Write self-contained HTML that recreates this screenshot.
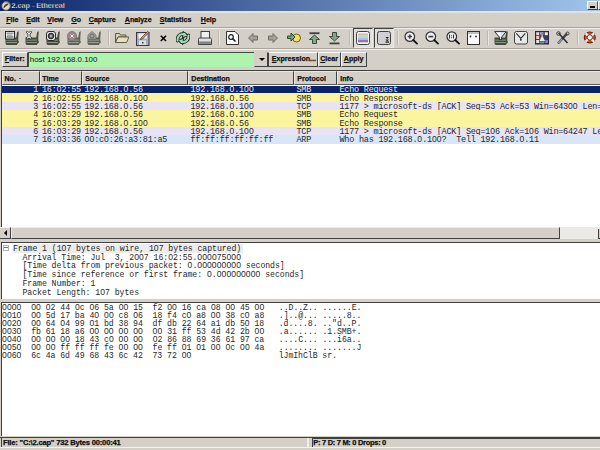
<!DOCTYPE html>
<html><head><meta charset="utf-8">
<style>
*{margin:0;padding:0;box-sizing:border-box}
html,body{width:600px;height:450px;overflow:hidden;background:#d4d0c8;font-family:"Liberation Sans",sans-serif}
.a{position:absolute}
.mono{font-family:"Liberation Mono",monospace;font-size:8.5px;letter-spacing:-0.24px;white-space:pre;line-height:8.3px}
.ui{position:absolute;font-size:7.1px;font-weight:bold;line-height:7.1px;color:#101010;white-space:pre;-webkit-text-stroke:0.25px #101010}
.ui u{text-decoration:underline;text-underline-offset:0.6px;text-decoration-thickness:0.8px}
#title{left:0;top:0;width:600px;height:10.5px;background:linear-gradient(to right,#0a246a 0px,#a6caf0 620px)}
.hdr{top:70.5px;height:14px;background:#d4d0c8;border-top:1px solid #eae8e2;border-left:1px solid #eae8e2;border-right:1px solid #404040;border-bottom:1px solid #5a5a5a}
.row{left:2px;width:598px;height:8.3px}
.cell{position:absolute;top:0.9px}
.dl{font-size:8.2px;letter-spacing:-0.06px;line-height:8px;color:#282828}
.z{font-family:"Liberation Sans",sans-serif;font-style:normal;display:inline-block;width:4.86px;text-align:center;letter-spacing:0;font-size:8.6px;line-height:0}
.btn{position:absolute;background:#d4d0c8;border-top:1px solid #fff;border-left:1px solid #fff;border-right:1px solid #404040;border-bottom:1px solid #404040}
</style></head><body>
<!-- title bar -->
<div class="a" id="title"></div>
<div class="a" style="left:1.5px;top:1px;width:9px;height:9px;border-radius:50%;background:#bcb8b0;border:1px solid #505050"></div>
<svg class="a" style="left:1px;top:0.5px" width="10" height="10" viewBox="0 0 10 10"><circle cx="5" cy="5" r="4.4" fill="#c8c4bc" stroke="#505050" stroke-width="0.8"/><circle cx="5" cy="5" r="3.1" fill="#e8dcc0"/><path d="M2.8 6.8 C3.3 4.2 4.8 3 7.2 2.8 L6.2 4.2 C5 4.6 4.2 5.6 2.8 6.8 Z" fill="#403828" stroke="#403828" stroke-width="0.7"/></svg>
<div class="ui" style="left:11.5px;top:2px;color:#fff;font-size:7.2px;line-height:7.2px">2.cap - Ethereal</div>
<div class="a" style="left:587px;top:0.5px;width:11px;height:9.5px;background:#d4d0c8;border-top:1px solid #fff;border-left:1px solid #fff;border-bottom:1px solid #404040;border-right:1px solid #505050"></div>
<div class="a" style="left:590px;top:6.3px;width:4.5px;height:1.6px;background:#000"></div>
<div class="a" style="left:598px;top:0.5px;width:2px;height:9.5px;background:#d4d0c8;border-top:1px solid #fff;border-left:1px solid #fff;border-bottom:1px solid #404040"></div>
<!-- frame strip -->
<div class="a" style="left:0;top:10.5px;width:600px;height:2px;background:#e4e2dc"></div>
<!-- menu -->
<div class="ui" style="left:6.2px;top:16.7px"><u>F</u>ile</div>
<div class="ui" style="left:26.3px;top:16.7px"><u>E</u>dit</div>
<div class="ui" style="left:47.3px;top:16.7px"><u>V</u>iew</div>
<div class="ui" style="left:71.3px;top:16.7px"><u>G</u>o</div>
<div class="ui" style="left:88.8px;top:16.7px"><u>C</u>apture</div>
<div class="ui" style="left:124.8px;top:16.7px"><u>A</u>nalyze</div>
<div class="ui" style="left:159.8px;top:16.7px"><u>S</u>tatistics</div>
<div class="ui" style="left:200.8px;top:16.7px"><u>H</u>elp</div>
<div class="a" style="left:0;top:26.5px;width:600px;height:1px;background:#a8a49c"></div>
<div class="a" style="left:0;top:27.5px;width:600px;height:1px;background:#f4f2ee"></div>
<!-- toolbar -->
<div class="a" style="left:107.5px;top:31px;width:1px;height:14px;background:#bcb8b0"></div><div class="a" style="left:108.5px;top:31px;width:1px;height:14px;background:#e8e6e0"></div>
<div class="a" style="left:218px;top:31px;width:1px;height:14px;background:#bcb8b0"></div><div class="a" style="left:219px;top:31px;width:1px;height:14px;background:#e8e6e0"></div>
<div class="a" style="left:348.5px;top:31px;width:1px;height:14px;background:#bcb8b0"></div><div class="a" style="left:349.5px;top:31px;width:1px;height:14px;background:#e8e6e0"></div>
<div class="a" style="left:396.5px;top:31px;width:1px;height:14px;background:#bcb8b0"></div><div class="a" style="left:397.5px;top:31px;width:1px;height:14px;background:#e8e6e0"></div>
<div class="a" style="left:487px;top:31px;width:1px;height:14px;background:#bcb8b0"></div><div class="a" style="left:488px;top:31px;width:1px;height:14px;background:#e8e6e0"></div>
<div class="a" style="left:576.5px;top:31px;width:1px;height:14px;background:#bcb8b0"></div><div class="a" style="left:577.5px;top:31px;width:1px;height:14px;background:#e8e6e0"></div>
<div class="a" style="left:352.5px;top:28px;width:20px;height:19.5px;border-top:1px solid #404040;border-left:1px solid #404040;border-right:1px solid #eceae4;border-bottom:1px solid #eceae4;background:#e2e0da"></div>
<div class="a" style="left:373.5px;top:28px;width:20px;height:19.5px;border-top:1px solid #404040;border-left:1px solid #404040;border-right:1px solid #eceae4;border-bottom:1px solid #eceae4;background:#e2e0da"></div>
<svg class="a" style="left:5px;top:31px" width="14" height="14" viewBox="0 0 14 14"><g opacity="1.0">
<path d="M0.5 6.5 L11.2 6.5 L12.2 1 L13.8 0.3 L13.3 6.5 L13.3 9.6 L14 11.6 L12.6 12.6 L12 14 L1.5 14 L0.5 12.6 Z" fill="#444c3e"/>
<rect x="1.3" y="8.6" width="10.5" height="1" fill="#8c9484"/>
<rect x="1.3" y="11" width="10.5" height="1" fill="#8c9484"/>
<rect x="0.5" y="0.5" width="9" height="7.5" fill="#f4f4f4" stroke="#282828" stroke-width="1"/><rect x="1.5" y="1.5" width="7" height="1.5" fill="#a0a0a0"/><rect x="2" y="3.6" width="5.5" height="0.9" fill="#787878"/><rect x="1.5" y="5.5" width="7" height="1" fill="#404040"/></g></svg>
<svg class="a" style="left:25px;top:31px" width="14" height="14" viewBox="0 0 14 14"><g opacity="1.0">
<path d="M0.5 6.5 L11.2 6.5 L12.2 1 L13.8 0.3 L13.3 6.5 L13.3 9.6 L14 11.6 L12.6 12.6 L12 14 L1.5 14 L0.5 12.6 Z" fill="#444c3e"/>
<rect x="1.3" y="8.6" width="10.5" height="1" fill="#8c9484"/>
<rect x="1.3" y="11" width="10.5" height="1" fill="#8c9484"/>
<path d="M1 1 L2.5 0.3 L4 1.5 L5.5 0.3 L7 1 L5 3 L5 5.5 L7 7 L5.5 8 L4 7 L2.5 8 L1 7 L3 5.5 L3 3 Z" fill="#f4f4f4" stroke="#282828" stroke-width="0.8"/></g></svg>
<svg class="a" style="left:46px;top:31px" width="14" height="14" viewBox="0 0 14 14"><g opacity="1.0">
<path d="M0.5 6.5 L11.2 6.5 L12.2 1 L13.8 0.3 L13.3 6.5 L13.3 9.6 L14 11.6 L12.6 12.6 L12 14 L1.5 14 L0.5 12.6 Z" fill="#444c3e"/>
<rect x="1.3" y="8.6" width="10.5" height="1" fill="#8c9484"/>
<rect x="1.3" y="11" width="10.5" height="1" fill="#8c9484"/>
<rect x="0.5" y="0.5" width="9" height="9" rx="2.5" fill="#e8e8e8" stroke="#282828"/><circle cx="5" cy="5" r="2.8" fill="#606060" stroke="#202020" stroke-width="1"/><circle cx="5" cy="5" r="1.2" fill="#b0b0b0"/></g></svg>
<svg class="a" style="left:66.5px;top:31px" width="14" height="14" viewBox="0 0 14 14"><g opacity="1.0">
<path d="M0.5 6.5 L11.2 6.5 L12.2 1 L13.8 0.3 L13.3 6.5 L13.3 9.6 L14 11.6 L12.6 12.6 L12 14 L1.5 14 L0.5 12.6 Z" fill="#5e645a"/>
<rect x="1.3" y="8.6" width="10.5" height="1" fill="#9a9e92"/>
<rect x="1.3" y="11" width="10.5" height="1" fill="#9a9e92"/>
<circle cx="5" cy="5" r="4.5" fill="#9a8a8a" stroke="#707070" stroke-width="0.8"/><path d="M3.5 3.5 L6.5 6.5 M6.5 3.5 L3.5 6.5" stroke="#f0e8e8" stroke-width="1"/></g></svg>
<svg class="a" style="left:87px;top:31px" width="14" height="14" viewBox="0 0 14 14"><g opacity="1.0">
<path d="M0.5 6.5 L11.2 6.5 L12.2 1 L13.8 0.3 L13.3 6.5 L13.3 9.6 L14 11.6 L12.6 12.6 L12 14 L1.5 14 L0.5 12.6 Z" fill="#5e645a"/>
<rect x="1.3" y="8.6" width="10.5" height="1" fill="#9a9e92"/>
<rect x="1.3" y="11" width="10.5" height="1" fill="#9a9e92"/>
<path d="M1 8 L1 4 L5 0.5 L9 4 L9 8 Z" fill="#a0a498" stroke="#707070" stroke-width="0.8"/><circle cx="5" cy="5" r="2" fill="none" stroke="#606060" stroke-width="0.8"/></g></svg>
<svg class="a" style="left:115px;top:32px" width="14" height="12" viewBox="0 0 14 12"><path d="M0.5 1.5 L4.5 1.5 L5.5 3 L11 3 L11 5 L3 5 L0.5 10.5 Z" fill="#d8d0a8" stroke="#505040" stroke-width="0.9"/><path d="M0.5 10.5 L3 5 L14 5 L11.5 10.5 Z" fill="#e8e0b8" stroke="#505040" stroke-width="0.9"/></svg>
<svg class="a" style="left:136px;top:31px" width="14" height="15" viewBox="0 0 14 15"><rect x="0.5" y="1.5" width="12.5" height="13" fill="#a8acc0" stroke="#383848" stroke-width="1"/><rect x="2.5" y="2.5" width="8.5" height="5" fill="#f0f0f0"/><rect x="3" y="9.5" width="7" height="4.5" fill="#e0e0e0"/><rect x="6" y="11" width="1.5" height="1.5" fill="#303040"/><path d="M5 7 L11.5 0.5 L13 1.5 L6.5 8 L4.5 8.5 Z" fill="#c8a070" stroke="#503010" stroke-width="0.7"/></svg>
<svg class="a" style="left:159.5px;top:34.5px" width="7" height="7" viewBox="0 0 7 7"><path d="M0.8 0.8 L6 6 M6 0.8 L0.8 6" stroke="#000" stroke-width="1.6"/></svg>
<svg class="a" style="left:176px;top:31px" width="14" height="14" viewBox="0 0 14 14"><g stroke="#1e3a2a" stroke-width="1" stroke-linejoin="round"><path d="M1.5 9.5 C1.2 5 4.5 2.3 8.5 3" fill="none" stroke-width="3.8" stroke-linecap="round"/><path d="M7 0.4 L12.6 4.4 L6.4 7 Z" fill="#1e3a2a"/><path d="M12.5 4.5 C12.8 9 9.5 11.7 5.5 11" fill="none" stroke-width="3.8" stroke-linecap="round"/><path d="M7 13.6 L1.4 9.6 L7.6 7 Z" fill="#1e3a2a"/></g><g fill="#a8d8b8"><path d="M1.5 9.5 C1.2 5 4.5 2.3 8.5 3" fill="none" stroke="#a8d8b8" stroke-width="2" stroke-linecap="round"/><path d="M7.8 1.6 L11.2 4.4 L7 6 Z"/><path d="M12.5 4.5 C12.8 9 9.5 11.7 5.5 11" fill="none" stroke="#a8d8b8" stroke-width="2" stroke-linecap="round"/><path d="M6.2 12.4 L2.8 9.6 L7 8 Z"/></g></svg>
<svg class="a" style="left:197.5px;top:31px" width="14" height="14" viewBox="0 0 14 14"><rect x="3" y="0.5" width="8.5" height="7" fill="#f0f0f0" stroke="#303030" stroke-width="0.9"/><path d="M1.5 7 L12.5 7 Q13.5 7 13.5 8.5 L13.5 13.5 L0.5 13.5 L0.5 8.5 Q0.5 7 1.5 7 Z" fill="#e0e0e0" stroke="#303030" stroke-width="0.9"/><rect x="1.2" y="10.5" width="11.6" height="2.4" fill="#808080"/></svg>
<svg class="a" style="left:226px;top:31px" width="14" height="14" viewBox="0 0 14 14"><path d="M0.5 0.5 L9 0.5 L12.5 4 L12.5 13.5 L0.5 13.5 Z" fill="#fafafa" stroke="#303030" stroke-width="1"/><circle cx="5" cy="6" r="2.3" fill="none" stroke="#202020" stroke-width="1.2"/><path d="M6.6 7.6 L9.5 10.5" stroke="#202020" stroke-width="1.6"/></svg>
<svg class="a" style="left:248px;top:32.5px" width="10" height="10" viewBox="0 0 10 10"><path d="M0.5 5 L5 0.5 L5 3 L9.5 3 L9.5 7 L5 7 L5 9.5 Z" fill="#a0a098" stroke="#686860" stroke-width="0.9"/></svg>
<svg class="a" style="left:268px;top:32.5px" width="10" height="10" viewBox="0 0 10 10"><path d="M9.5 5 L5 0.5 L5 3 L0.5 3 L0.5 7 L5 7 L5 9.5 Z" fill="#a0a098" stroke="#686860" stroke-width="0.9"/></svg>
<svg class="a" style="left:286.5px;top:32px" width="14" height="11" viewBox="0 0 14 11"><circle cx="9.5" cy="6" r="4" fill="#f0e070" stroke="#605010" stroke-width="0.9"/><path d="M0.5 4 L4 4 L4 1 L8 5 L4 9 L4 6.5 L0.5 6.5 Z" fill="#70a878" stroke="#204020" stroke-width="0.9"/></svg>
<svg class="a" style="left:308.5px;top:32px" width="11" height="12" viewBox="0 0 11 12"><rect x="0.5" y="0.3" width="10" height="1.8" fill="#404040"/><path d="M5.5 3 L10.5 7.5 L7.5 7.5 L7.5 11.5 L3.5 11.5 L3.5 7.5 L0.5 7.5 Z" fill="#80a888" stroke="#304030" stroke-width="0.9"/></svg>
<svg class="a" style="left:329px;top:31.5px" width="11" height="13" viewBox="0 0 11 13"><rect x="0.5" y="10.5" width="10" height="1.8" fill="#404040"/><path d="M5.5 9 L10.5 4.5 L7.5 4.5 L7.5 0.5 L3.5 0.5 L3.5 4.5 L0.5 4.5 Z" fill="#80a888" stroke="#304030" stroke-width="0.9"/></svg>
<svg class="a" style="left:356px;top:31px" width="14" height="14" viewBox="0 0 14 14"><rect x="0.5" y="0.5" width="13" height="13" rx="2" fill="#f4f4f4" stroke="#404040" stroke-width="1"/><rect x="2" y="2.5" width="10" height="2" fill="#d8b8a8"/><rect x="2" y="4.5" width="10" height="2.2" fill="#a8e0c8"/><rect x="2" y="6.7" width="10" height="2.2" fill="#c8b0e0"/><rect x="2" y="8.9" width="10" height="2.4" fill="#8a7ca8"/></svg>
<svg class="a" style="left:376.5px;top:31px" width="14" height="14" viewBox="0 0 14 14"><rect x="0.5" y="0.5" width="13" height="13" rx="2" fill="#d0d0d4" stroke="#404040" stroke-width="1"/><path d="M8.5 6 L12 6 L10.2 8 Z M8.5 8.5 L12 8.5 L10.2 10.5 Z" fill="#202020"/><rect x="8.5" y="10.5" width="3.5" height="1.2" fill="#202020"/></svg>
<svg class="a" style="left:404px;top:31px" width="14" height="14" viewBox="0 0 14 14"><circle cx="5.8" cy="5.6" r="4.8" fill="#f0f0f0" stroke="#303030" stroke-width="1.2"/><path d="M9.2 9 L13 12.6" stroke="#101010" stroke-width="1.8" stroke-linecap="round"/><path d="M3.6 5.6 L8 5.6 M5.8 3.4 L5.8 7.8" stroke="#404040" stroke-width="1.5"/></svg>
<svg class="a" style="left:425px;top:31px" width="14" height="14" viewBox="0 0 14 14"><circle cx="5.8" cy="5.6" r="4.8" fill="#f0f0f0" stroke="#303030" stroke-width="1.2"/><path d="M9.2 9 L13 12.6" stroke="#101010" stroke-width="1.8" stroke-linecap="round"/><path d="M3.4 5.6 L8.2 5.6" stroke="#404040" stroke-width="1.7"/></svg>
<svg class="a" style="left:445.5px;top:31px" width="14" height="14" viewBox="0 0 14 14"><circle cx="5.8" cy="5.6" r="4.8" fill="#f0f0f0" stroke="#303030" stroke-width="1.2"/><path d="M9.2 9 L13 12.6" stroke="#101010" stroke-width="1.8" stroke-linecap="round"/><path d="M3.5 3.5 L3.5 7.5 M7.5 3.5 L7.5 7.5" stroke="#303030" stroke-width="1"/><rect x="5" y="4.3" width="1" height="1" fill="#303030"/><rect x="5" y="6.3" width="1" height="1" fill="#303030"/></svg>
<svg class="a" style="left:467px;top:31px" width="13" height="14" viewBox="0 0 13 14"><rect x="0.5" y="0.5" width="12" height="13" fill="#fafafa" stroke="#303030" stroke-width="1"/><rect x="1" y="1" width="11" height="2" fill="#c0c0c0"/><circle cx="3.5" cy="5.5" r="0.9" fill="#303030"/><circle cx="9" cy="5.5" r="0.9" fill="#303030"/></svg>
<svg class="a" style="left:493.5px;top:31px" width="14" height="14" viewBox="0 0 14 14"><g opacity="1.0">
<path d="M0.5 6.5 L11.2 6.5 L12.2 1 L13.8 0.3 L13.3 6.5 L13.3 9.6 L14 11.6 L12.6 12.6 L12 14 L1.5 14 L0.5 12.6 Z" fill="#444c3e"/>
<rect x="1.3" y="8.6" width="10.5" height="1" fill="#8c9484"/>
<rect x="1.3" y="11" width="10.5" height="1" fill="#8c9484"/>
<path d="M0.6 0.6 L12.2 0.6 L7.6 6.2 L7.6 8.6 L5.4 8.6 L5.4 6.2 Z" fill="#dce8f0" stroke="#283038" stroke-width="1"/><path d="M2.5 1.5 L6.5 1.5 L6.5 5.5 Z" fill="#ffffff"/></g></svg>
<svg class="a" style="left:514px;top:31px" width="14" height="14" viewBox="0 0 14 14"><rect x="0.5" y="0.5" width="13" height="12.5" rx="2" fill="#e8e8e8" stroke="#404040" stroke-width="1"/><path d="M2.3 2.3 L6.8 7.4 L11.3 2.3" fill="none" stroke="#303030" stroke-width="1.1"/><circle cx="6.8" cy="8.8" r="0.9" fill="#101010"/></svg>
<svg class="a" style="left:535px;top:31px" width="14" height="14" viewBox="0 0 14 14"><rect x="0.5" y="0.5" width="13" height="12.5" fill="#3a3868" stroke="#282840"/><rect x="1.2" y="1.2" width="3" height="3" fill="#f0d0e0"/><rect x="1.2" y="5" width="3" height="3" fill="#f8c8c8"/><rect x="1.2" y="9" width="3" height="3" fill="#f8e8e0"/><rect x="5" y="1.2" width="3.5" height="2.5" fill="#a8a0d8"/><rect x="9.8" y="1.2" width="3" height="3" fill="#f8f0b0"/><rect x="9.8" y="9" width="3" height="3" fill="#8878c8"/><path d="M6.2 3 L8 3 L8 5.5 L10.5 10.5 L4 10.5 L6.2 5.5 Z" fill="#e8ece0" stroke="#505048" stroke-width="0.6"/><rect x="5" y="11" width="4" height="1.4" fill="#70a090"/></svg>
<svg class="a" style="left:556px;top:31px" width="14" height="14" viewBox="0 0 14 14"><path d="M2 12.5 L11 2.5" stroke="#404040" stroke-width="2.4"/><path d="M2.2 12.3 L6 8" stroke="#8aa0b8" stroke-width="1.4"/><path d="M2.5 2 L11.5 12" stroke="#303030" stroke-width="1.6"/><circle cx="2.5" cy="2.5" r="1.8" fill="none" stroke="#404040" stroke-width="1"/><circle cx="11.5" cy="2.5" r="1.5" fill="none" stroke="#404040" stroke-width="1"/></svg>
<svg class="a" style="left:583px;top:31px" width="14" height="13" viewBox="0 0 14 13"><circle cx="6.8" cy="6.4" r="6" fill="#5a2010"/><circle cx="6.8" cy="6.4" r="5" fill="#c85030"/><path d="M2.5 2.2 L5 4.6 M11.1 2.2 L8.6 4.6 M2.5 10.6 L5 8.2 M11.1 10.6 L8.6 8.2" stroke="#f8f0e8" stroke-width="2.2"/><circle cx="6.8" cy="6.4" r="2.6" fill="#f8f4f0" stroke="#602010" stroke-width="0.8"/></svg>
<!-- toolbar bottom -->
<div class="a" style="left:0;top:48px;width:600px;height:1px;background:#a8a49c"></div>
<div class="a" style="left:0;top:49px;width:600px;height:1px;background:#f4f2ee"></div>

<!-- filter bar -->
<div class="btn" style="left:1.5px;top:51.5px;width:26px;height:15.5px"></div>
<div class="ui" style="left:4.8px;top:55.5px"><u>F</u>ilter:</div>
<div class="a" style="left:27.5px;top:52px;width:227px;height:14.5px;background:#aef4ae;border-top:1px solid #405040;border-left:1px solid #405040"></div>
<div class="a" style="left:29.8px;top:55.8px;font-size:7.9px;line-height:7.9px;color:#101010;white-space:pre">host 192.168.0.100</div>
<div class="btn" style="left:254px;top:51.5px;width:14px;height:15.5px;border-top-color:#d4d0c8;border-left-color:#d4d0c8"></div>
<div class="a" style="left:258.5px;top:57.5px;width:0;height:0;border-left:3px solid transparent;border-right:3px solid transparent;border-top:3px solid #000"></div>
<div class="btn" style="left:268px;top:51.5px;width:49.5px;height:15.5px;border-left-color:#404040"></div>
<div class="ui" style="left:271.8px;top:55.5px"><u>E</u>xpression...</div>
<div class="btn" style="left:317.5px;top:51.5px;width:23.5px;height:15.5px"></div>
<div class="ui" style="left:320.2px;top:55.5px"><u>C</u>lear</div>
<div class="btn" style="left:341px;top:51.5px;width:26px;height:15.5px"></div>
<div class="ui" style="left:343.8px;top:55.5px"><u>A</u>pply</div>

<!-- packet list frame -->
<div class="a" style="left:1px;top:69.5px;width:599px;height:157px;background:#fff;border-top:1px solid #404040;border-left:1px solid #404040"></div>
<div class="a hdr" style="left:2px;width:37.5px"></div>
<div class="a hdr" style="left:39.5px;width:42.5px"></div>
<div class="a hdr" style="left:82px;width:106px"></div>
<div class="a hdr" style="left:188px;width:106px"></div>
<div class="a hdr" style="left:294px;width:43px"></div>
<div class="a hdr" style="left:337px;width:263px;border-right:none"></div>
<div class="ui" style="left:4.5px;top:75.5px">No.</div>
<div class="a" style="left:19px;top:77.5px;width:2px;height:1px;background:#606060"></div>
<div class="ui" style="left:42.3px;top:75.5px">Time</div>
<div class="ui" style="left:85.3px;top:75.5px">Source</div>
<div class="ui" style="left:191.3px;top:75.5px">Destination</div>
<div class="ui" style="left:297.3px;top:75.5px">Protocol</div>
<div class="ui" style="left:340.3px;top:75.5px">Info</div>

<div class="a row mono" style="top:85.5px;background:#0a246a;color:#e8ecf4"><span class="cell" style="left:31.3px">1</span><span class="cell" style="left:40px">16:<i class="z">0</i>2:55</span><span class="cell" style="left:82.5px">192.168.<i class="z">0</i>.56</span><span class="cell" style="left:188.5px">192.168.<i class="z">0</i>.1<i class="z">0</i><i class="z">0</i></span><span class="cell" style="left:294.5px">SMB</span><span class="cell" style="left:337.5px">Echo Request</span></div>
<div class="a row mono" style="top:93.8px;background:#fbf5a0;color:#282828"><span class="cell" style="left:31.3px">2</span><span class="cell" style="left:40px">16:<i class="z">0</i>2:55</span><span class="cell" style="left:82.5px">192.168.<i class="z">0</i>.1<i class="z">0</i><i class="z">0</i></span><span class="cell" style="left:188.5px">192.168.<i class="z">0</i>.56</span><span class="cell" style="left:294.5px">SMB</span><span class="cell" style="left:337.5px">Echo Response</span></div>
<div class="a row mono" style="top:102.1px;background:#e8e4f6;color:#282828"><span class="cell" style="left:31.3px">3</span><span class="cell" style="left:40px">16:<i class="z">0</i>2:55</span><span class="cell" style="left:82.5px">192.168.<i class="z">0</i>.56</span><span class="cell" style="left:188.5px">192.168.<i class="z">0</i>.1<i class="z">0</i><i class="z">0</i></span><span class="cell" style="left:294.5px">TCP</span><span class="cell" style="left:337.5px">1177 &gt; microsoft-ds [ACK] Seq=53 Ack=53 Win=643<i class="z">0</i><i class="z">0</i> Len=<i class="z">0</i></span></div>
<div class="a row mono" style="top:110.4px;background:#fbf5a0;color:#282828"><span class="cell" style="left:31.3px">4</span><span class="cell" style="left:40px">16:<i class="z">0</i>3:29</span><span class="cell" style="left:82.5px">192.168.<i class="z">0</i>.56</span><span class="cell" style="left:188.5px">192.168.<i class="z">0</i>.1<i class="z">0</i><i class="z">0</i></span><span class="cell" style="left:294.5px">SMB</span><span class="cell" style="left:337.5px">Echo Request</span></div>
<div class="a row mono" style="top:118.7px;background:#fbf5a0;color:#282828"><span class="cell" style="left:31.3px">5</span><span class="cell" style="left:40px">16:<i class="z">0</i>3:29</span><span class="cell" style="left:82.5px">192.168.<i class="z">0</i>.1<i class="z">0</i><i class="z">0</i></span><span class="cell" style="left:188.5px">192.168.<i class="z">0</i>.56</span><span class="cell" style="left:294.5px">SMB</span><span class="cell" style="left:337.5px">Echo Response</span></div>
<div class="a row mono" style="top:127.0px;background:#e8e4f6;color:#282828"><span class="cell" style="left:31.3px">6</span><span class="cell" style="left:40px">16:<i class="z">0</i>3:29</span><span class="cell" style="left:82.5px">192.168.<i class="z">0</i>.56</span><span class="cell" style="left:188.5px">192.168.<i class="z">0</i>.1<i class="z">0</i><i class="z">0</i></span><span class="cell" style="left:294.5px">TCP</span><span class="cell" style="left:337.5px">1177 &gt; microsoft-ds [ACK] Seq=1<i class="z">0</i>6 Ack=1<i class="z">0</i>6 Win=64247 Len=<i class="z">0</i></span></div>
<div class="a row mono" style="top:135.3px;background:#d8e6f8;color:#282828"><span class="cell" style="left:31.3px">7</span><span class="cell" style="left:40px">16:<i class="z">0</i>3:36</span><span class="cell" style="left:82.5px"><i class="z">0</i><i class="z">0</i>:c<i class="z">0</i>:26:a3:81:a5</span><span class="cell" style="left:188.5px">ff:ff:ff:ff:ff:ff</span><span class="cell" style="left:294.5px">ARP</span><span class="cell" style="left:337.5px">Who has 192.168.<i class="z">0</i>.1<i class="z">0</i><i class="z">0</i>?  Tell 192.168.<i class="z">0</i>.11</span></div>
<div class="a" style="left:2px;top:93px;width:598px;height:0.8px;background:#e8ecf4"></div>

<!-- hscrollbar -->
<div class="a" style="left:0px;top:226.5px;width:600px;height:12.5px;background:#eceae6"></div>
<div class="a" style="left:0px;top:227px;width:10.5px;height:12px;background:#d4d0c8;border-right:1px solid #404040;border-bottom:1px solid #404040;border-top:1px solid #f4f2ee"></div>
<div class="a" style="left:3.5px;top:229.5px;width:0;height:0;border-top:3px solid transparent;border-bottom:3px solid transparent;border-right:3px solid #000"></div>
<div class="btn" style="left:10.5px;top:227px;width:549.5px;height:12px;border-top-color:#f0eee8;border-left-color:#f0eee8"></div>
<div class="a" style="left:597.5px;top:229px;width:2.5px;height:10px;background:#d4d0c8;border-left:1px solid #404040;border-bottom:1px solid #404040"></div>

<!-- details pane -->
<div class="a" style="left:1px;top:242px;width:599px;height:56.5px;background:#fff;border-top:1px solid #404040;border-left:1px solid #404040"></div>
<div class="a" style="left:12.5px;top:244px;width:230px;height:8.5px;background:#ececec"></div>
<div class="a" style="left:3px;top:244.5px;width:6px;height:6px;border:1px solid #b0b0b0;background:#fff"></div>
<div class="a" style="left:4px;top:247px;width:4px;height:1px;background:#707070"></div>
<div class="a mono dl" style="left:13px;top:244.60px">Frame 1 (1<i class="z">0</i>7 bytes on wire, 1<i class="z">0</i>7 bytes captured)</div>
<div class="a mono dl" style="left:22.5px;top:253.50px">Arrival Time: Jul  3, 2<i class="z">0</i><i class="z">0</i>7 16:<i class="z">0</i>2:55.<i class="z">0</i><i class="z">0</i><i class="z">0</i><i class="z">0</i>75<i class="z">0</i><i class="z">0</i><i class="z">0</i></div>
<div class="a mono dl" style="left:22.5px;top:262.40px">[Time delta from previous packet: <i class="z">0</i>.<i class="z">0</i><i class="z">0</i><i class="z">0</i><i class="z">0</i><i class="z">0</i><i class="z">0</i><i class="z">0</i><i class="z">0</i><i class="z">0</i> seconds]</div>
<div class="a mono dl" style="left:22.5px;top:271.30px">[Time since reference or first frame: <i class="z">0</i>.<i class="z">0</i><i class="z">0</i><i class="z">0</i><i class="z">0</i><i class="z">0</i><i class="z">0</i><i class="z">0</i><i class="z">0</i><i class="z">0</i> seconds]</div>
<div class="a mono dl" style="left:22.5px;top:280.20px">Frame Number: 1</div>
<div class="a mono dl" style="left:22.5px;top:289.10px">Packet Length: 1<i class="z">0</i>7 bytes</div>

<!-- hex pane -->
<div class="a" style="left:1px;top:302px;width:599px;height:133.5px;background:#fff;border-top:1px solid #404040;border-left:1px solid #404040"></div>
<div class="a mono dl" style="left:2px;top:303.80px"><i class="z">0</i><i class="z">0</i><i class="z">0</i><i class="z">0</i>  <i class="z">0</i><i class="z">0</i> <i class="z">0</i>2 44 <i class="z">0</i>c <i class="z">0</i>6 5a <i class="z">0</i><i class="z">0</i> 15  f2 <i class="z">0</i><i class="z">0</i> 16 ca <i class="z">0</i>8 <i class="z">0</i><i class="z">0</i> 45 <i class="z">0</i><i class="z">0</i>   ..D..Z.. ......E.</div>
<div class="a mono dl" style="left:2px;top:311.80px"><i class="z">0</i><i class="z">0</i>1<i class="z">0</i>  <i class="z">0</i><i class="z">0</i> 5d 17 ba 4<i class="z">0</i> <i class="z">0</i><i class="z">0</i> c8 <i class="z">0</i>6  18 f4 c<i class="z">0</i> a8 <i class="z">0</i><i class="z">0</i> 38 c<i class="z">0</i> a8   .]..@... .....8..</div>
<div class="a mono dl" style="left:2px;top:319.80px"><i class="z">0</i><i class="z">0</i>2<i class="z">0</i>  <i class="z">0</i><i class="z">0</i> 64 <i class="z">0</i>4 99 <i class="z">0</i>1 bd 38 94  df db 22 64 a1 db 5<i class="z">0</i> 18   .d....8. ..&quot;d..P.</div>
<div class="a mono dl" style="left:2px;top:327.80px"><i class="z">0</i><i class="z">0</i>3<i class="z">0</i>  fb 61 18 a6 <i class="z">0</i><i class="z">0</i> <i class="z">0</i><i class="z">0</i> <i class="z">0</i><i class="z">0</i> <i class="z">0</i><i class="z">0</i>  <i class="z">0</i><i class="z">0</i> 31 ff 53 4d 42 2b <i class="z">0</i><i class="z">0</i>   .a...... .1.SMB+.</div>
<div class="a mono dl" style="left:2px;top:335.80px"><i class="z">0</i><i class="z">0</i>4<i class="z">0</i>  <i class="z">0</i><i class="z">0</i> <i class="z">0</i><i class="z">0</i> <i class="z">0</i><i class="z">0</i> 18 43 c<i class="z">0</i> <i class="z">0</i><i class="z">0</i> <i class="z">0</i><i class="z">0</i>  <i class="z">0</i>2 86 88 69 36 61 97 ca   ....C... ...i6a..</div>
<div class="a mono dl" style="left:2px;top:343.80px"><i class="z">0</i><i class="z">0</i>5<i class="z">0</i>  <i class="z">0</i><i class="z">0</i> <i class="z">0</i><i class="z">0</i> ff ff ff fe <i class="z">0</i><i class="z">0</i> <i class="z">0</i><i class="z">0</i>  fe ff <i class="z">0</i>1 <i class="z">0</i>1 <i class="z">0</i><i class="z">0</i> <i class="z">0</i>c <i class="z">0</i><i class="z">0</i> 4a   ........ .......J</div>
<div class="a mono dl" style="left:2px;top:351.80px"><i class="z">0</i><i class="z">0</i>6<i class="z">0</i>  6c 4a 6d 49 68 43 6c 42  73 72 <i class="z">0</i><i class="z">0</i>                  lJmIhClB sr.</div>

<!-- status bar -->
<div class="a" style="left:0;top:437px;width:600px;height:1px;background:#404040"></div>
<div class="a" style="left:1px;top:438px;width:306px;height:9px;border-left:1px solid #404040"></div>
<div class="ui" style="left:3px;top:439.3px;font-size:7.6px;line-height:7.6px;letter-spacing:-0.2px">File: "C:\2.cap" 732 Bytes 00:00:41</div>
<div class="a" style="left:307px;top:438px;width:2px;height:9px;background:#f0eee8"></div>
<div class="a" style="left:311.5px;top:438px;width:288.5px;height:9px;border-left:1px solid #404040;border-top:1px solid #404040"></div>
<div class="ui" style="left:313.3px;top:439.3px;font-size:7.5px;line-height:7.5px;letter-spacing:-0.3px">P: 7 D: 7 M: 0 Drops: 0</div>
<div class="a" style="left:0;top:446.5px;width:600px;height:1px;background:#f4f2ee"></div>
</body></html>
